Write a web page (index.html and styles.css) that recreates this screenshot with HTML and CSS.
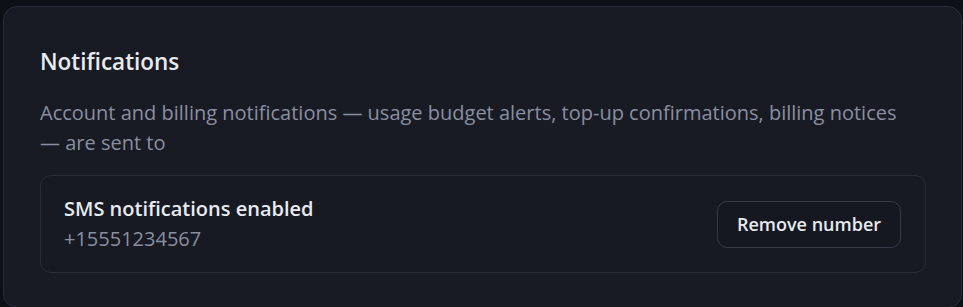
FILE: index.html
```html
<!DOCTYPE html>
<html lang="en">
<head>
<meta charset="utf-8">
<title>Notifications</title>
<link rel="stylesheet" href="styles.css">
</head>
<body>
<section class="card">
  <h2 class="card-title">Notifications</h2>
  <p class="card-desc">Account and billing notifications — usage budget alerts, top-up confirmations, billing notices — are sent to</p>
  <div class="sms-row">
    <div class="sms-info">
      <div class="sms-title">SMS notifications enabled</div>
      <div class="sms-number">+15551234567</div>
    </div>
    <button class="btn" type="button">Remove number</button>
  </div>
</section>
</body>
</html>
```
FILE: styles.css
```css
html, body {
  margin: 0;
  padding: 0;
  background: #0d1016;
}
body {
  padding: 6px 1px 0 3px;
  font-family: "Open Sans", "Noto Sans", sans-serif;
  color: #e6e8ee;
}
.card {
  background: #181b24;
  border: 1px solid #2a2e39;
  border-radius: 14px;
  padding: 40px 35px 34px 36px;
}
.card-title {
  margin: 0;
  font-size: 22.5px;
  font-weight: 600;
  line-height: 30px;
  color: #e8eaf0;
}
.card-desc {
  margin: 21px 0 0;
  max-width: 872px;
  font-size: 20px;
  line-height: 30px;
  color: #8a8fa0;
}
.sms-row {
  margin-top: 17px;
  display: flex;
  align-items: center;
  justify-content: space-between;
  border: 1px solid #292d38;
  border-radius: 11px;
  background: #171a23;
  padding: 18px 24px 18px 23px;
}
.sms-info {
  display: flex;
  flex-direction: column;
}
.sms-title {
  font-size: 20px;
  font-weight: 600;
  line-height: 30px;
  color: #e8eaf0;
}
.sms-number {
  font-size: 20px;
  line-height: 30px;
  color: #8a8fa0;
}
.btn {
  font-family: inherit;
  font-size: 18px;
  font-weight: 600;
  color: #e8eaf0;
  background: #151821;
  border: 1px solid #363a47;
  border-radius: 10px;
  width: 184px;
  height: 47px;
  padding: 0;
}
```
